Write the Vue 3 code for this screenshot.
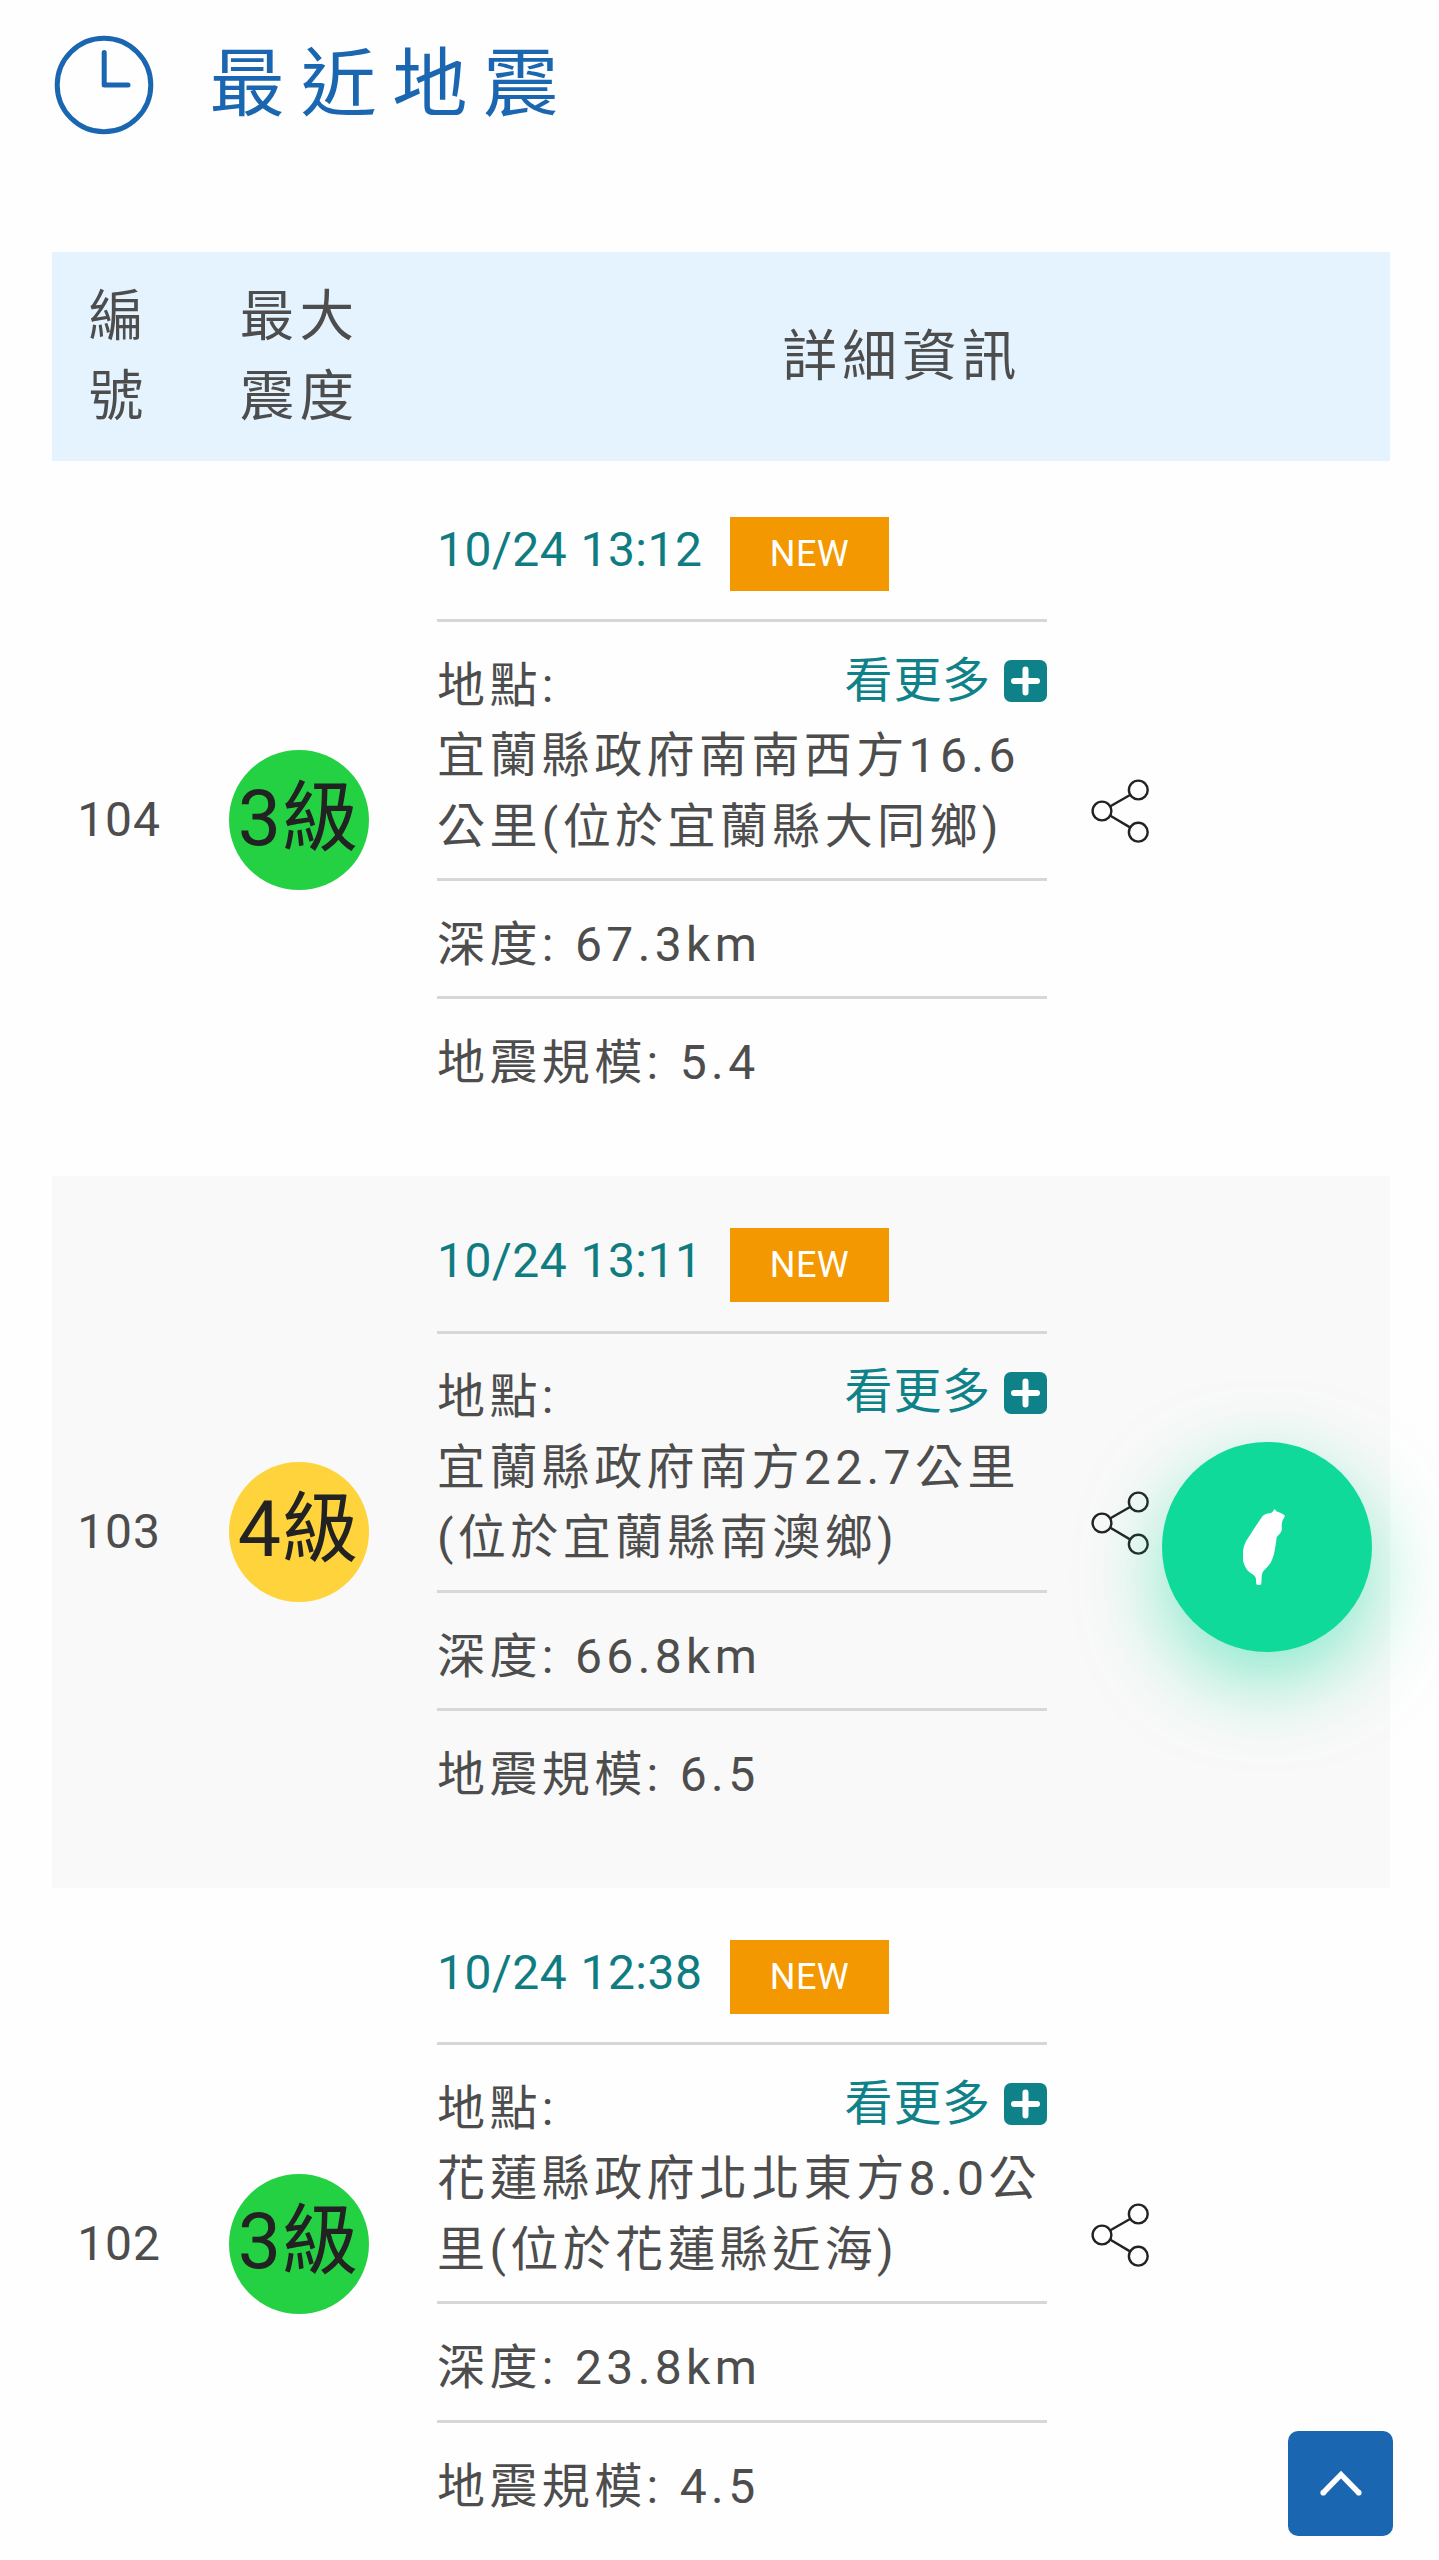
<script setup>
import { ref } from 'vue'

const quakes = ref([
  {
    id: 104,
    level: 3,
    time: '10/24 13:12',
    location: '宜蘭縣政府南南西方16.6公里(位於宜蘭縣大同鄉)',
    depth: '67.3km',
    magnitude: '5.4'
  },
  {
    id: 103,
    level: 4,
    time: '10/24 13:11',
    location: '宜蘭縣政府南方22.7公里(位於宜蘭縣南澳鄉)',
    depth: '66.8km',
    magnitude: '6.5'
  },
  {
    id: 102,
    level: 3,
    time: '10/24 12:38',
    location: '花蓮縣政府北北東方8.0公里(位於花蓮縣近海)',
    depth: '23.8km',
    magnitude: '4.5'
  }
])
</script>

<template>
  <main class="page">
    <header class="page-title">
      <svg class="clock" viewBox="0 0 100 100">
        <circle cx="50" cy="50" r="46.8" />
        <path d="M50.2 17.5V50H74" />
      </svg>
      <h1>最近地震</h1>
    </header>

    <section class="quake-table">
      <div class="table-head">
        <div class="th">編<br>號</div>
        <div class="th">最大<br>震度</div>
        <div class="th">詳細資訊</div>
      </div>

      <article class="quake-row" v-for="quake in quakes" :key="quake.id">
        <div class="number">{{ quake.id }}</div>
        <div class="intensity">
          <span class="level" :class="'level-' + quake.level">{{ quake.level }}級</span>
        </div>
        <ul class="details">
          <li class="time-item">
            <a class="time">{{ quake.time }}</a>
            <span class="tag">NEW</span>
          </li>
          <li>
            <a class="more">
              看更多
              <svg viewBox="0 0 43 42">
                <rect width="43" height="42" rx="7" />
                <path d="M21.5 9.5V32.5M10 21H33" />
              </svg>
            </a>
            <div>地點:</div>
            <div class="location">{{ quake.location }}</div>
          </li>
          <li>深度: {{ quake.depth }}</li>
          <li>地震規模: {{ quake.magnitude }}</li>
        </ul>
        <div class="share">
          <svg viewBox="0 0 60 66">
            <circle cx="12" cy="33" r="9.4" />
            <circle cx="48.3" cy="12" r="9.4" />
            <circle cx="48.3" cy="54.2" r="9.4" />
            <path d="M20.4 28.2L40 17M20.4 37.8L40 49.4" />
          </svg>
        </div>
      </article>
    </section>

    <button class="map-button">
      <svg viewBox="0 0 42 76">
        <path d="M31.5 0C30.7 1.8 29.6 3.1 28 3.9C24.6 4 21.2 5 19.2 7.6L10.5 20.5C7.5 25.7 2.9 31 1.1 36.8C-.4 42-.3 47.5.1 52C1.3 57 3.5 60.8 6.5 63.2C9.2 65 11.7 66 12.7 68.8C13.2 71 13 73 13.4 75.2C14 76.2 17.6 76.2 18.2 75.2C18.8 71.5 18.3 68.3 19 64.9C20.2 61.3 24.5 58.5 27.6 53.8C31.4 47.5 32.4 37.6 33.7 28.2C35 26.3 37.7 24.6 38.7 21.3C39.2 19 38.2 16.5 39 14.5C38.7 11.5 41.5 9.5 41.8 6.6C39.5 4.5 36.5 3.2 33.8 2.5Z" />
      </svg>
    </button>

    <button class="top-button">
      <svg viewBox="0 0 42 26">
        <path d="M3 22L21 3.6L39 22" />
        <circle cx="3.2" cy="21.8" r="2.8" />
        <circle cx="38.8" cy="21.8" r="2.8" />
      </svg>
    </button>
  </main>
</template>

<style>
body {
  margin: 0;
  background: #fefefe;
}
</style>

<style scoped>
.page {
  position: relative;
  box-sizing: border-box;
  width: 1439px;
  height: 2560px;
  padding: 0 49px 0 52px;
  overflow: hidden;
  color: #4d4d4d;
  font-family: Roboto, "Noto Sans CJK TC", sans-serif;
  font-size: 48px;
  line-height: 70.4px;
  letter-spacing: 4.4px;
}

.page-title {
  display: flex;
  align-items: center;
  height: 251.5px;
  padding-bottom: 81px;
  box-sizing: border-box;
  gap: 55.5px;
  color: #1a66b0;
}

.page-title h1 {
  margin: 0 0 3px;
  font-size: 75.5px;
  font-weight: 400;
  letter-spacing: 15.7px;
}

.clock {
  width: 100px;
  height: 100px;
  margin-left: 2px;
  fill: none;
  stroke: #1a66b0;
  stroke-width: 5;
  stroke-linecap: round;
  stroke-linejoin: round;
}

.table-head {
  display: grid;
  grid-template-columns: 133px 229px 1fr;
  align-items: center;
  height: 209px;
  box-sizing: border-box;
  margin-bottom: 4px;
  padding-top: 1.5px;
  background: #e4f3fe;
}

.th {
  font-size: 54.6px;
  line-height: 79.7px;
  letter-spacing: 5.1px;
  text-align: center;
}

.quake-row {
  display: grid;
  grid-template-columns: 133px 252px 610px 1fr;
  align-items: center;
  height: 711.7px;
}

.quake-row:nth-child(odd) {
  background: #f9f9f9;
}

.number {
  padding-left: 1px;
  letter-spacing: 0.8px;
  text-align: center;
}

.intensity {
  padding-left: 44px;
}

.level {
  display: flex;
  align-items: center;
  justify-content: center;
  box-sizing: border-box;
  width: 140px;
  height: 140px;
  padding: 0 2px 3px 0;
  border-radius: 50%;
  color: #222;
  font-size: 77px;
  letter-spacing: 0;
  white-space: nowrap;
}

.level-3 {
  background: #24d143;
}

.level-4 {
  background: #fed33b;
}

.details {
  align-self: start;
  margin: 0;
  padding: 0;
  list-style: none;
}

.details li {
  padding: 28.8px 0 16.2px;
  border-bottom: 3px solid #d7d7d7;
  word-spacing: 0.8px;
}

.details li:last-child {
  border-bottom: 0;
}

.details .time-item {
  display: flex;
  align-items: baseline;
  box-sizing: border-box;
  height: 157.4px;
  padding: 50px 0 0;
}

.time {
  width: 293px;
  color: #0f7c82;
  letter-spacing: 0.5px;
}

.tag {
  box-sizing: border-box;
  width: 159px;
  height: 74px;
  background: #f39800;
  color: #fff;
  font-size: 36px;
  line-height: 74px;
  letter-spacing: 0.4px;
  text-align: center;
}

.more {
  display: flex;
  float: right;
  align-items: center;
  gap: 13px;
  margin-top: -5px;
  color: #0f8289;
  letter-spacing: 0.8px;
}

.more svg {
  width: 43px;
  height: 42px;
  fill: #0f8289;
}

.more path {
  stroke: #fff;
  stroke-width: 6;
  stroke-linecap: round;
}

.location {
  word-break: break-all;
}

.share {
  display: flex;
  padding: 0 0 18px 43px;
}

.share svg {
  width: 60px;
  height: 66px;
  fill: none;
  stroke: #222;
  stroke-width: 2.4;
}

button {
  display: flex;
  align-items: center;
  justify-content: center;
  padding: 0;
  border: 0;
}

/* floating buttons over the list */
.map-button {
  position: absolute;
  top: 1442px;
  right: 67px;
  width: 210px;
  height: 210px;
  border-radius: 50%;
  background: #0fda9a;
  box-shadow: 0 28px 80px rgba(15, 218, 154, 0.5);
}

.map-button svg {
  width: 42px;
  height: 76px;
  margin-right: 6px;
  fill: #fff;
}

.top-button {
  position: absolute;
  right: 46px;
  bottom: 24.5px;
  width: 105px;
  height: 105px;
  border-radius: 10px;
  background: #1a66b0;
}

.top-button svg {
  width: 42px;
  height: 26px;
  margin-top: 2px;
  fill: #fff;
}

.top-button path {
  fill: none;
  stroke: #fff;
  stroke-width: 5.4;
}
</style>
